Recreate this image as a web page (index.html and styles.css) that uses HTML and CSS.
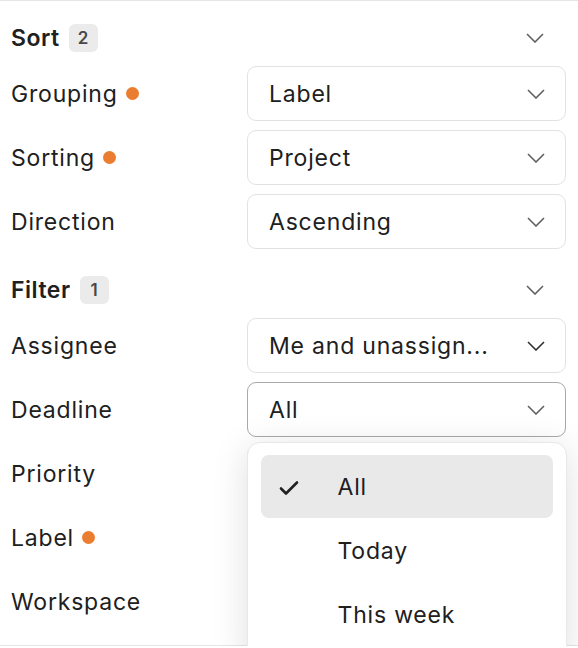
FILE: index.html
```html
<!DOCTYPE html>
<html>
<head>
    <meta charset="UTF-8">
    <title>View options</title>
    <link rel="stylesheet" href="styles.css">
</head>
<body>
    <div class="panel">
        <div class="section">
            <div class="head">
                <span class="title">Sort</span>
                <span class="badge">2</span>
                <svg class="chev head-chev" viewBox="0 0 18 10"><path d="M1 1l8 8 8-8"/></svg>
            </div>
            <div class="row">
                <span class="name">Grouping <i class="dot"></i></span>
                <div class="select"><span>Label</span><svg class="chev" viewBox="0 0 18 10"><path d="M1 1l8 8 8-8"/></svg></div>
            </div>
            <div class="row">
                <span class="name">Sorting <i class="dot"></i></span>
                <div class="select"><span>Project</span><svg class="chev" viewBox="0 0 18 10"><path d="M1 1l8 8 8-8"/></svg></div>
            </div>
            <div class="row">
                <span class="name">Direction</span>
                <div class="select"><span>Ascending</span><svg class="chev" viewBox="0 0 18 10"><path d="M1 1l8 8 8-8"/></svg></div>
            </div>
        </div>

        <div class="section">
            <div class="head">
                <span class="title">Filter</span>
                <span class="badge">1</span>
                <svg class="chev head-chev" viewBox="0 0 18 10"><path d="M1 1l8 8 8-8"/></svg>
            </div>
            <div class="row">
                <span class="name">Assignee</span>
                <div class="select"><span>Me and unassign...</span><svg class="chev dark" viewBox="0 0 18 10"><path d="M1 1l8 8 8-8"/></svg></div>
            </div>
            <div class="row">
                <span class="name">Deadline</span>
                <div class="select open">
                    <span>All</span><svg class="chev" viewBox="0 0 18 10"><path d="M1 1l8 8 8-8"/></svg>
                    <ul class="menu">
                        <li class="item active">
                            <svg class="check" viewBox="0 0 20 16"><path d="M2 8.5l5 5L18 2.5"/></svg>
                            All
                        </li>
                        <li class="item">Today</li>
                        <li class="item">This week</li>
                    </ul>
                </div>
            </div>
            <div class="row">
                <span class="name">Priority</span>
                <div class="select"><span>All</span><svg class="chev" viewBox="0 0 18 10"><path d="M1 1l8 8 8-8"/></svg></div>
            </div>
            <div class="row">
                <span class="name">Label <i class="dot"></i></span>
                <div class="select"><span>Urgent</span><svg class="chev" viewBox="0 0 18 10"><path d="M1 1l8 8 8-8"/></svg></div>
            </div>
            <div class="row">
                <span class="name">Workspace</span>
                <div class="select"><span>All</span><svg class="chev" viewBox="0 0 18 10"><path d="M1 1l8 8 8-8"/></svg></div>
            </div>
        </div>
    </div>
</body>
</html>
```

FILE: styles.css
```css
*{margin: 0;padding: 0;box-sizing: border-box;}
body{
    background: #fff;
    font-family: Inter, "Noto Sans", sans-serif;
    color: #202020;
    overflow: hidden;
}
.panel{
    height: 646px;
    border-top: 1px solid #e6e6e6;
    border-bottom: 1px solid #e6e6e6;
    padding: 9px 12px 0 11px;
}
.section + .section{
    margin-top: 13px;
}
.head{
    height: 56px;
    display: flex;
    align-items: center;
    gap: 9px;
}
.title{
    font-size: 23px;
    font-weight: 600;
    letter-spacing: 0.5px;
}
.badge{
    min-width: 29px;
    height: 28px;
    border-radius: 6px;
    background: #ebebeb;
    color: #484848;
    font-size: 17px;
    font-weight: 600;
    display: flex;
    align-items: center;
    justify-content: center;
}
.chev{
    width: 18px;
    height: 10px;
    fill: none;
    stroke: #606060;
    stroke-width: 1.6;
    flex-shrink: 0;
}
.chev.dark{
    stroke: #303030;
}
.head-chev{
    margin-left: auto;
    margin-right: 22px;
}
.row{
    display: flex;
    align-items: center;
    justify-content: space-between;
    height: 55px;
}
.row + .row{
    margin-top: 9px;
}
.name{
    font-size: 23px;
    letter-spacing: 0.8px;
    display: flex;
    align-items: center;
    gap: 8px;
}
.dot{
    width: 13px;
    height: 13px;
    border-radius: 50%;
    background: #ea7d2f;
}
.select{
    position: relative;
    width: 319px;
    height: 55px;
    border: 1.5px solid #e2e2e2;
    border-radius: 9px;
    padding: 0 20px 0 21px;
    display: flex;
    align-items: center;
    justify-content: space-between;
    font-size: 23px;
    letter-spacing: 0.8px;
    background: #fff;
}
.select.open{
    border-color: #a9a9a9;
}
.menu{
    position: absolute;
    top: 59px;
    left: -1.5px;
    width: 320px;
    height: 220px;
    list-style: none;
    background: #fff;
    border: 1px solid #e8e8e8;
    border-radius: 13px;
    box-shadow: 0 6px 36px rgba(0,0,0,0.13);
    padding: 12px 13px;
    z-index: 5;
}
.item{
    position: relative;
    height: 63px;
    display: flex;
    align-items: center;
    padding-left: 77px;
    border-radius: 8px;
    margin-bottom: 1px;
}
.item.active{
    background: #e9e9e9;
}
.check{
    position: absolute;
    left: 18px;
    top: 25px;
    width: 20px;
    height: 16px;
    fill: none;
    stroke: #202020;
    stroke-width: 2.6;
    stroke-linecap: round;
    stroke-linejoin: round;
}
```
